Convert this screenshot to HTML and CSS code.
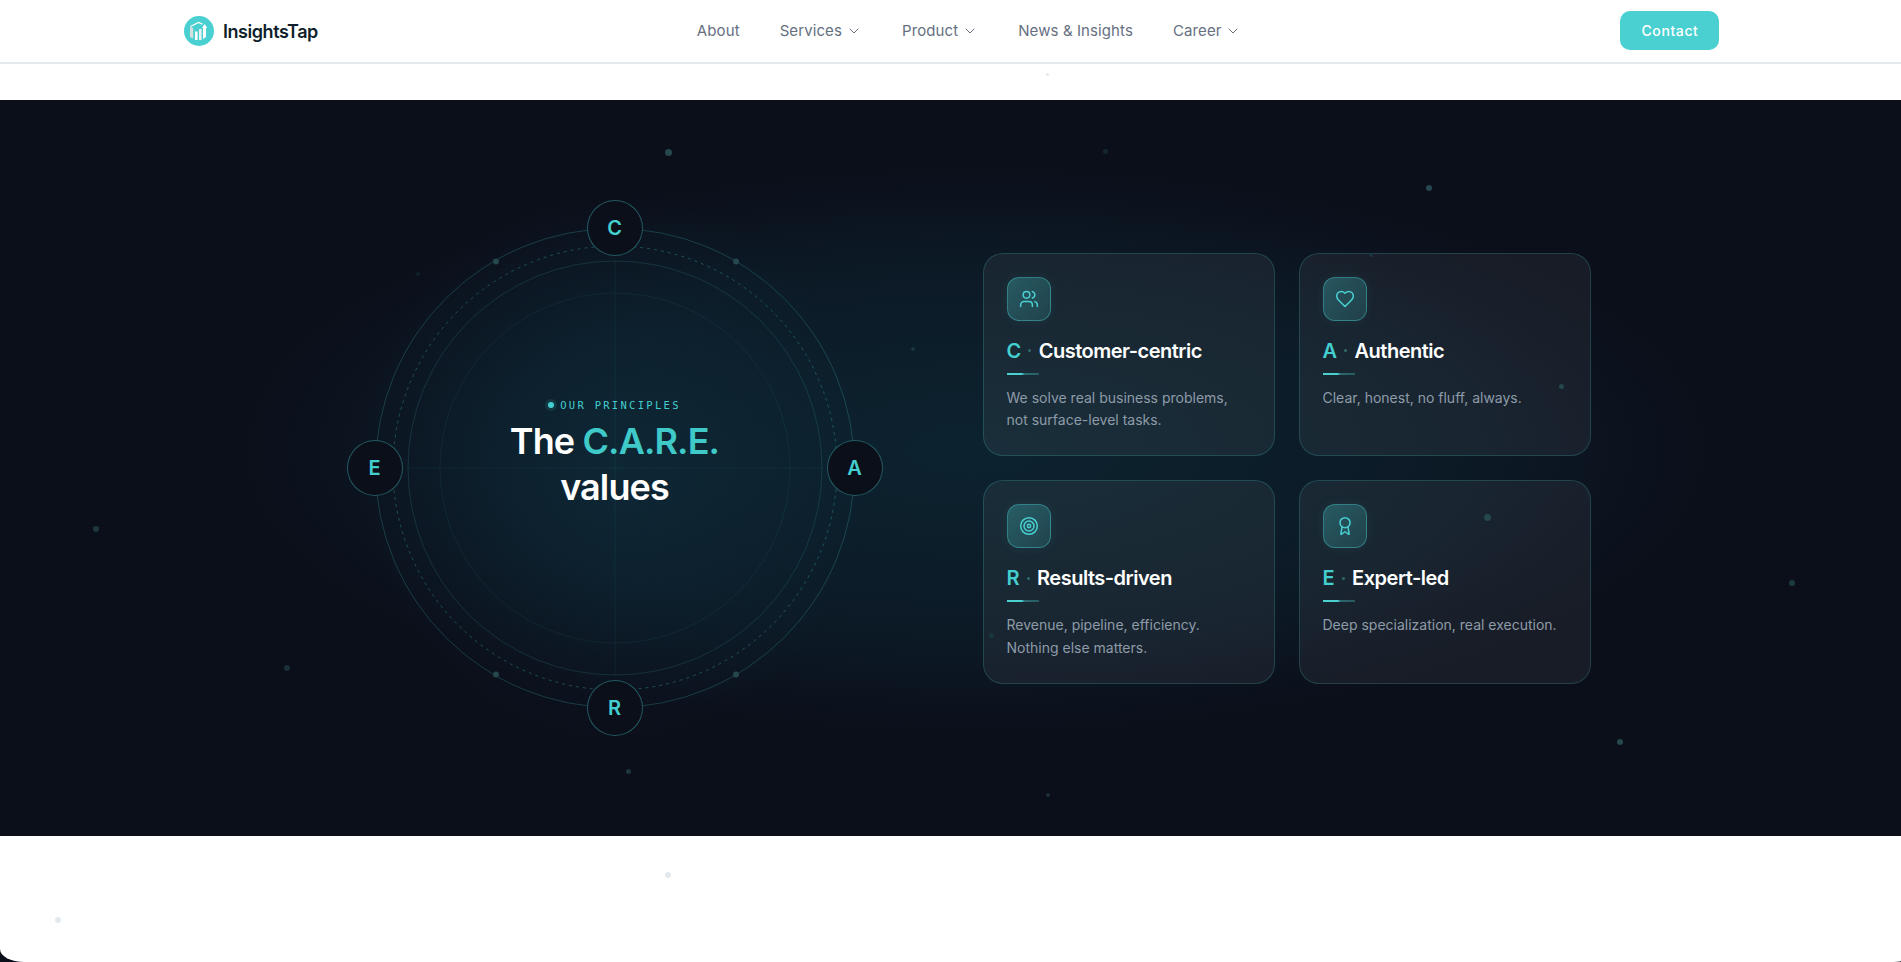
FILE: index.html
```html
<!DOCTYPE html>
<html lang="en">
<head>
    <meta charset="UTF-8">
    <meta name="viewport" content="width=device-width, initial-scale=1.0">
    <title>InsightsTap - The C.A.R.E. values</title>
    <link rel="stylesheet" href="styles.css">
</head>
<body>
    <div class="page">
        <header class="navbar">
            <div class="navbar-inner">
                <a class="logo" href="#">
                    <svg class="logo-mark" viewBox="0 0 30 30" aria-hidden="true">
                        <circle cx="15" cy="15" r="15" fill="#4ad0d1"/>
                        <path d="M6.5 10.5 14.5 6.5l4 1.6" fill="none" stroke="#fff" stroke-width="1.3"/>
                        <path d="M6 10.5v10.5l3.2 1.8V12.2z" fill="#d5dfe0"/>
                        <rect x="11" y="15.5" width="2.6" height="8.5" fill="#fff"/>
                        <rect x="15" y="13" width="2.6" height="11" fill="#e8f2f2"/>
                        <path d="M19 12h-1l2.6-4 2.6 4h-1.2v9l-3 2z" fill="#fff"/>
                    </svg>
                    <span>InsightsTap</span>
                </a>
                <nav class="nav-links">
                    <a href="#">About</a>
                    <a href="#">Services
                        <svg class="chev" viewBox="0 0 24 24"><path d="m6 9 6 6 6-6"/></svg>
                    </a>
                    <a href="#">Product
                        <svg class="chev" viewBox="0 0 24 24"><path d="m6 9 6 6 6-6"/></svg>
                    </a>
                    <a href="#">News &amp; Insights</a>
                    <a href="#">Career
                        <svg class="chev" viewBox="0 0 24 24"><path d="m6 9 6 6 6-6"/></svg>
                    </a>
                </nav>
                <a class="contact-btn" href="#">Contact</a>
            </div>
        </header>

        <div class="spacer-top"></div>

        <section class="care">
            <div class="care-inner">
                <div class="orbit-col">
                    <div class="orbit">
                        <svg class="orbit-lines" viewBox="0 0 480 480" aria-hidden="true">
                            <circle class="ring" cx="240" cy="240" r="239.5"/>
                            <circle class="ring-dash" cx="240" cy="240" r="222"/>
                            <circle class="ring-mid" cx="240" cy="240" r="207"/>
                            <circle class="ring-faint" cx="240" cy="240" r="175"/>
                            <line class="ring-faint" x1="240" y1="33" x2="240" y2="447"/>
                            <line class="ring-faint" x1="33" y1="240" x2="447" y2="240"/>
                            <circle class="ring-dot" cx="121" cy="33.5" r="3"/>
                            <circle class="ring-dot" cx="361" cy="33.5" r="3"/>
                            <circle class="ring-dot" cx="121" cy="446.5" r="3"/>
                            <circle class="ring-dot" cx="361" cy="446.5" r="3"/>
                        </svg>
                        <div class="node node-c">C</div>
                        <div class="node node-a">A</div>
                        <div class="node node-r">R</div>
                        <div class="node node-e">E</div>
                        <div class="orbit-text">
                            <p class="eyebrow"><i></i>OUR PRINCIPLES</p>
                            <h2>The <em>C.A.R.E.</em><br>values</h2>
                        </div>
                    </div>
                </div>

                <div class="cards">
                    <article class="card">
                        <div class="card-icon">
                            <svg viewBox="0 0 24 24"><path d="M16 21v-2a4 4 0 0 0-4-4H6a4 4 0 0 0-4 4v2"/><circle cx="9" cy="7" r="4"/><path d="M22 21v-2a4 4 0 0 0-3-3.87"/><path d="M16 3.13a4 4 0 0 1 0 7.75"/></svg>
                        </div>
                        <h3><b>C</b><i></i>Customer-centric</h3>
                        <div class="rule"></div>
                        <p>We solve real business problems,<br>not surface-level tasks.</p>
                    </article>
                    <article class="card">
                        <div class="card-icon">
                            <svg viewBox="0 0 24 24"><path d="M19 14c1.49-1.46 3-3.21 3-5.5A5.5 5.5 0 0 0 16.5 3c-1.76 0-3 .5-4.5 2-1.5-1.5-2.74-2-4.5-2A5.5 5.5 0 0 0 2 8.5c0 2.3 1.5 4.05 3 5.5l7 7Z"/></svg>
                        </div>
                        <h3><b>A</b><i></i>Authentic</h3>
                        <div class="rule"></div>
                        <p>Clear, honest, no fluff, always.</p>
                    </article>
                    <article class="card">
                        <div class="card-icon">
                            <svg viewBox="0 0 24 24"><circle cx="12" cy="12" r="10"/><circle cx="12" cy="12" r="6"/><circle cx="12" cy="12" r="2"/></svg>
                        </div>
                        <h3><b>R</b><i></i>Results-driven</h3>
                        <div class="rule"></div>
                        <p>Revenue, pipeline, efficiency.<br>Nothing else matters.</p>
                    </article>
                    <article class="card">
                        <div class="card-icon">
                            <svg viewBox="0 0 24 24"><path d="m15.477 12.89 1.515 8.526a.5.5 0 0 1-.81.47l-3.58-2.687a1 1 0 0 0-1.197 0l-3.586 2.686a.5.5 0 0 1-.81-.469l1.514-8.526"/><circle cx="12" cy="8" r="6"/></svg>
                        </div>
                        <h3><b>E</b><i></i>Expert-led</h3>
                        <div class="rule"></div>
                        <p>Deep specialization, real execution.</p>
                    </article>
                </div>
            </div>
        </section>

        <div class="spacer-bottom"></div>

        <!-- floating particles -->
        <div class="particles">
            <span class="p p1"></span><span class="p p2"></span><span class="p p3"></span>
            <span class="p p4"></span><span class="p p5"></span><span class="p p6"></span>
            <span class="p p7"></span><span class="p p8"></span><span class="p p9"></span>
            <span class="p p10"></span><span class="p p11"></span><span class="p p12"></span>
            <span class="p p13"></span><span class="p p14"></span><span class="p p15"></span>
            <span class="p light p16"></span><span class="p light p17"></span><span class="p light p18"></span>
        </div>
    </div>
</body>
</html>
```

FILE: styles.css
```css
* {
    box-sizing: border-box;
}
html, body {
    margin: 0;
    padding: 0;
    height: 100%;
    overflow: hidden;
    background: #0b0f1a;
}
body {
    font-family: Inter, "Noto Sans", sans-serif;
    color: #fff;
}
a {
    text-decoration: none;
}
.page {
    position: relative;
    height: 962px;
    overflow: hidden;
    background: #fff;
    border-bottom-left-radius: 24px 13px;
    border-bottom-right-radius: 12px 1px;
}

/* navbar */
.navbar {
    height: 64px;
    background: #fff;
    border-bottom: 2px solid #e4e9ed;
}
.navbar-inner {
    max-width: 1538px;
    height: 61px;
    margin: 0 auto;
    padding-left: 2.5px;
    display: flex;
    align-items: center;
    justify-content: space-between;
}
.logo {
    display: flex;
    align-items: center;
    gap: 9px;
    margin-top: 1px;
    font-size: 18px;
    font-weight: 600;
    letter-spacing: -0.45px;
    color: #0f1f2b;
}
.logo-mark {
    width: 30px;
    height: 30px;
}
.nav-links {
    display: flex;
    align-items: center;
    gap: 40px;
    font-size: 15px;
}
.nav-links a {
    display: flex;
    align-items: center;
    gap: 4px;
    color: #66707f;
    letter-spacing: 0.1px;
}
.chev {
    width: 16px;
    height: 16px;
    fill: none;
    stroke: #66707f;
    stroke-width: 1.5;
    stroke-linecap: round;
    stroke-linejoin: round;
}
.contact-btn {
    width: 99px;
    height: 39px;
    display: flex;
    align-items: center;
    justify-content: center;
    background: #4ad0d1;
    color: #fff;
    font-size: 14px;
    font-weight: 500;
    letter-spacing: 0.6px;
    border-radius: 10px;
}
.spacer-top {
    height: 36px;
}
.spacer-bottom {
    height: 126px;
}

/* C.A.R.E. section */
.care {
    height: 736px;
    display: flex;
    align-items: center;
    background:
        radial-gradient(ellipse 250px 280px at 615px 368px, rgba(20, 70, 90, 0.26), transparent),
        radial-gradient(ellipse 740px 285px at 975px 350px, rgba(14, 60, 75, 0.44), rgba(14, 60, 75, 0.24) 65%, transparent),
        #0b0f1a;
}
.care-inner {
    width: 1280px;
    margin: 0 auto;
    display: grid;
    grid-template-columns: 1fr 1fr;
    gap: 64px;
    align-items: center;
}
.orbit-col {
    display: flex;
    justify-content: center;
}
.orbit {
    position: relative;
    width: 480px;
    height: 480px;
    display: flex;
    align-items: center;
    justify-content: center;
}
.orbit-lines {
    position: absolute;
    inset: 0;
    fill: none;
}
.ring {
    stroke: rgba(74, 208, 209, 0.22);
    stroke-width: 1;
}
.ring-mid {
    stroke: rgba(74, 208, 209, 0.15);
    stroke-width: 1;
}
.ring-dash {
    stroke: rgba(74, 208, 209, 0.3);
    stroke-width: 1;
    stroke-dasharray: 3 4;
}
.ring-faint {
    stroke: rgba(74, 208, 209, 0.07);
    stroke-width: 1;
}
.ring-dot {
    fill: #25474d;
}
.node {
    position: absolute;
    width: 56px;
    height: 56px;
    display: flex;
    align-items: center;
    justify-content: center;
    background: #0b0f1a;
    border: 1px solid rgba(74, 208, 209, 0.38);
    border-radius: 50%;
    color: #43cfcf;
    font-size: 20px;
    font-weight: 600;
}
.node-c { top: -28px; left: 212px; }
.node-a { top: 212px; right: -28px; }
.node-r { bottom: -28px; left: 212px; }
.node-e { top: 212px; left: -28px; }
.orbit-text {
    position: relative;
    padding-bottom: 30px;
    text-align: center;
}
.eyebrow {
    margin: 0 0 5px;
    display: flex;
    align-items: center;
    justify-content: center;
    gap: 6px;
    font-family: "DejaVu Sans Mono", "Liberation Mono", monospace;
    font-size: 10.5px;
    line-height: 16px;
    letter-spacing: 2.3px;
    color: #43cfcf;
}
.eyebrow i {
    width: 6px;
    height: 6px;
    border-radius: 50%;
    background: #43cfcf;
    box-shadow: 0 0 0 3px rgba(74, 208, 209, 0.12);
}
.orbit-text h2 {
    margin: 0;
    font-size: 36px;
    line-height: 46px;
    font-weight: 600;
    letter-spacing: -0.9px;
}
.orbit-text em {
    font-style: normal;
    color: #3fc9c9;
}

/* cards */
.cards {
    display: grid;
    grid-template-columns: 1fr 1fr;
    gap: 24px;
}
.card {
    padding: 23px;
    border: 1px solid rgba(74, 208, 209, 0.2);
    border-radius: 20px;
    background: rgba(255, 255, 255, 0.055);
}
.card-icon {
    width: 44px;
    height: 44px;
    display: flex;
    align-items: center;
    justify-content: center;
    margin-bottom: 16px;
    border: 1px solid rgba(74, 208, 209, 0.4);
    border-radius: 12px;
    background: linear-gradient(135deg, rgba(74, 208, 209, 0.3), rgba(74, 208, 209, 0.16));
    box-shadow: 0 0 12px rgba(74, 208, 209, 0.08);
}
.card-icon svg {
    width: 20px;
    height: 20px;
    fill: none;
    stroke: #4ad0d1;
    stroke-width: 1.8;
    stroke-linecap: round;
    stroke-linejoin: round;
}
.card h3 {
    margin: 0;
    display: flex;
    align-items: center;
    font-size: 20px;
    line-height: 28px;
    font-weight: 600;
    letter-spacing: -0.5px;
}
.card h3 b {
    font-weight: 600;
    color: #43cfcf;
}
.card h3 i {
    width: 3px;
    height: 3px;
    margin: 0 7.5px;
    border-radius: 50%;
    background: #2f6a6e;
}
.rule {
    width: 32px;
    height: 2px;
    margin: 8px 0 12px;
    background: linear-gradient(90deg, #4ad0d1 45%, rgba(74, 208, 209, 0.4) 55%, rgba(74, 208, 209, 0.3));
}
.card p {
    margin: 0;
    font-size: 14px;
    line-height: 22.75px;
    color: #8e9ba8;
}

/* particles */
.particles {
    position: absolute;
    inset: 0;
    pointer-events: none;
}
.p {
    position: absolute;
    width: 6px;
    height: 6px;
    margin: -3px 0 0 -3px;
    border-radius: 50%;
    background: #25474d;
}
.p.light {
    background: #e3e9ec;
}
.p1 { left: 668px; top: 152px; width: 7px; height: 7px; }
.p2 { left: 1429px; top: 188px; }
.p3 { left: 1106px; top: 152px; width: 5px; height: 5px; background: #14262e; }
.p4 { left: 96px; top: 529px; background: #1e363d; }
.p5 { left: 287px; top: 668px; background: #1a2f37; }
.p6 { left: 914px; top: 350px; width: 4px; height: 4px; background: #1a3640; }
.p7 { left: 1562px; top: 387px; width: 5px; height: 5px; }
.p8 { left: 1487px; top: 517px; width: 7px; height: 7px; }
.p9 { left: 1792px; top: 583px; background: #1e3a41; }
.p10 { left: 992px; top: 636px; width: 5px; height: 5px; background: #1a3640; }
.p11 { left: 1620px; top: 742px; }
.p12 { left: 629px; top: 772px; width: 5px; height: 5px; background: #1e363d; }
.p13 { left: 1049px; top: 796px; width: 4px; height: 4px; background: #1a2f37; }
.p14 { left: 419px; top: 275px; width: 4px; height: 4px; background: #10202a; }
.p15 { left: 1372px; top: 256px; width: 4px; height: 4px; background: #1a3640; }
.p16 { left: 1049px; top: 76px; width: 3px; height: 3px; background: #f0f3f4; }
.p17 { left: 668px; top: 875px; }
.p18 { left: 58px; top: 920px; }
```
